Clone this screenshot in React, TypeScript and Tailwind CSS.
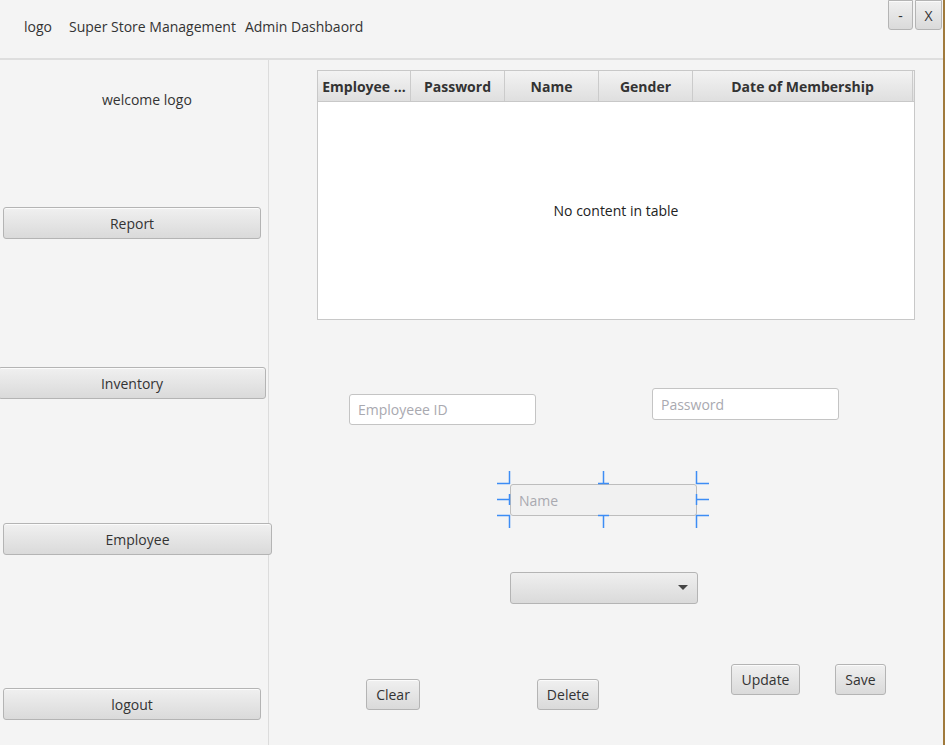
import React from "react";

const font = { fontFamily: '"Open Sans", "Noto Sans", "Liberation Sans", sans-serif' };

function Btn({ label, className = "" }: { label: string; className?: string }) {
  return (
    <div
      className={
        "flex items-center justify-center rounded-[3px] border border-[#b4b4b4] bg-gradient-to-b from-[#f0f0f0] to-[#dadada] text-[14px] text-[#333] shadow-[inset_0_1px_0_#fbfbfb] " +
        className
      }
    >
      {label}
    </div>
  );
}

function Field({ placeholder, className = "" }: { placeholder: string; className?: string }) {
  return (
    <div
      className={
        "flex items-center rounded-[3px] border border-[#c4c4c4] bg-white pl-[8px] text-[14px] text-[#a9a9b0] " +
        className
      }
    >
      {placeholder}
    </div>
  );
}

function Handles() {
  const c = "#3d8df5";
  const lines: [number, number, number, number][] = [
    [14.5, 2, 14.5, 15], [2, 14.5, 15, 14.5],
    [2, 30.5, 15, 30.5], [14.5, 25, 14.5, 36],
    [2, 46.5, 15, 46.5], [14.5, 46, 14.5, 59],
    [108.5, 2, 108.5, 15], [103, 14.5, 114, 14.5],
    [103, 46.5, 114, 46.5], [108.5, 46, 108.5, 59],
    [201.5, 2, 201.5, 15], [201, 14.5, 214, 14.5],
    [201, 30.5, 214, 30.5], [201.5, 25, 201.5, 36],
    [201, 46.5, 214, 46.5], [201.5, 46, 201.5, 59],
  ];
  return (
    <svg className="pointer-events-none absolute left-[-15px] top-[-15px]" width="217" height="62">
      {lines.map(([x1, y1, x2, y2], i) => (
        <line key={i} x1={x1} y1={y1} x2={x2} y2={y2} stroke={c} strokeWidth="1.5" />
      ))}
    </svg>
  );
}

export default function App() {
  const cols = [
    { t: "Employee ...", w: 93 },
    { t: "Password", w: 94 },
    { t: "Name", w: 94 },
    { t: "Gender", w: 94 },
    { t: "Date of Membership", w: 220 },
  ];
  return (
    <div
      className="relative h-[745px] w-[945px] overflow-hidden border-r-2 border-[#a07a3c] bg-[#f4f4f4] text-[#333]"
      style={font}
    >
      {/* top bar */}
      <div className="flex h-[60px] items-start border-b-2 border-[#dedede]">
        <div className="mt-[16px] flex text-[14px] text-[#333]">
          <span className="ml-[24px]">logo</span>
          <span className="ml-[17px]">Super Store Management</span>
          <span className="ml-[9px]">Admin Dashbaord</span>
        </div>
        <div className="ml-auto mr-[1px] flex gap-[2px]">
          <Btn label="-" className="h-[30px] w-[25px] rounded-t-none" />
          <Btn label="X" className="h-[30px] w-[27px] rounded-t-none" />
        </div>
      </div>

      <div className="flex h-[685px]">
        {/* sidebar */}
        <div className="relative z-10 flex w-[269px] shrink-0 flex-col items-start border-r border-[#dcdcdc]">
          <div className="ml-[102px] mt-[30px] h-[20px] text-[14px] leading-[20px]">welcome logo</div>
          <Btn label="Report" className="ml-[3px] mt-[97px] h-[32px] w-[258px]" />
          <Btn label="Inventory" className="-ml-[2px] mt-[128px] h-[32px] w-[268px]" />
          <Btn label="Employee" className="ml-[3px] mt-[124px] h-[32px] w-[269px]" />
          <Btn label="logout" className="ml-[3px] mt-[133px] h-[32px] w-[258px]" />
        </div>

        {/* main */}
        <div className="flex flex-1 flex-col items-start">
          <div className="ml-[48px] mt-[10px] flex h-[250px] w-[598px] flex-col border border-[#c8c8c8] bg-white">
            <div className="flex h-[31px] border-b border-[#c8c8c8] bg-gradient-to-b from-[#f3f3f3] to-[#dfdfdf]">
              {cols.map((c, i) => (
                <div
                  key={i}
                  className="flex items-center justify-center border-r border-[#cbcbcb] text-[14px] font-bold text-[#333]"
                  style={{ width: c.w }}
                >
                  {c.t}
                </div>
              ))}
            </div>
            <div className="flex flex-1 items-center justify-center text-[14px] text-[#222]">
              No content in table
            </div>
          </div>

          <div className="mt-[68px] flex items-start">
            <Field placeholder="Employeee ID" className="ml-[80px] mt-[6px] h-[31px] w-[187px]" />
            <Field placeholder="Password" className="ml-[116px] h-[32px] w-[187px]" />
          </div>

          <div className="relative ml-[241px] mt-[59px]">
            <div className="flex h-[32px] w-[187px] items-center rounded-[3px] border border-[#bdbdbd] bg-[#f1f1f1] pl-[8px] text-[14px] text-[#a9a9b0]">
              Name
            </div>
            <Handles />
          </div>

          <div className="ml-[241px] mt-[56px] flex h-[32px] w-[188px] items-center justify-end rounded-[3px] border border-[#b4b4b4] bg-gradient-to-b from-[#efefef] to-[#dadada] pr-[9px]">
            <svg width="10" height="6" viewBox="0 0 10 6">
              <path d="M0 0 H10 L5 5 Z" fill="#444" />
            </svg>
          </div>

          <div className="mt-[60px] flex items-start">
            <Btn label="Clear" className="ml-[97px] mt-[15px] h-[31px] w-[54px]" />
            <Btn label="Delete" className="ml-[117px] mt-[15px] h-[31px] w-[62px]" />
            <Btn label="Update" className="ml-[132px] h-[31px] w-[69px]" />
            <Btn label="Save" className="ml-[35px] h-[31px] w-[51px]" />
          </div>
        </div>
      </div>
    </div>
  );
}
